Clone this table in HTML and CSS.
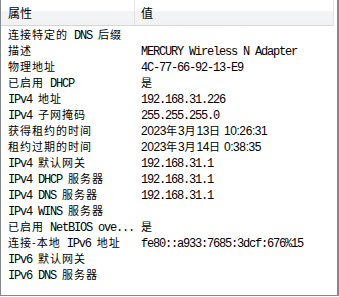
FILE: index.html
```html
<!DOCTYPE html>
<html lang="zh-CN">
<head>
  <meta charset="UTF-8" />
  <title>网络连接详细信息</title>
  <link rel="stylesheet" href="styles.css">
</head>
<body>

  <!-- Details list view -->
  <div class="list">
    <div class="list-head">
      <div class="col name">属性</div>
      <div class="col value">值</div>
    </div>

    <div class="list-body">
      <div class="row"><div class="col name">连接特定的<span class="en"> DNS </span>后缀</div><div class="col value"></div></div>
      <div class="row"><div class="col name">描述</div><div class="col value"><span class="en">MERCURY Wireless N Adapter</span></div></div>
      <div class="row"><div class="col name">物理地址</div><div class="col value"><span class="en">4C-77-66-92-13-E9</span></div></div>
      <div class="row"><div class="col name">已启用<span class="en"> DHCP</span></div><div class="col value">是</div></div>
      <div class="row"><div class="col name"><span class="en">IPv4 </span>地址</div><div class="col value"><span class="en">192.168.31.226</span></div></div>
      <div class="row"><div class="col name"><span class="en">IPv4 </span>子网掩码</div><div class="col value"><span class="en">255.255.255.0</span></div></div>
      <div class="row"><div class="col name">获得租约的时间</div><div class="col value"><span class="num">2023</span>年<span class="num">3</span>月<span class="num">13</span>日<span class="num"> 10:26:31</span></div></div>
      <div class="row"><div class="col name">租约过期的时间</div><div class="col value"><span class="num">2023</span>年<span class="num">3</span>月<span class="num">14</span>日<span class="num"> 0:38:35</span></div></div>
      <div class="row"><div class="col name"><span class="en">IPv4 </span>默认网关</div><div class="col value"><span class="en">192.168.31.1</span></div></div>
      <div class="row"><div class="col name"><span class="en">IPv4 DHCP </span>服务器</div><div class="col value"><span class="en">192.168.31.1</span></div></div>
      <div class="row"><div class="col name"><span class="en">IPv4 DNS </span>服务器</div><div class="col value"><span class="en">192.168.31.1</span></div></div>
      <div class="row"><div class="col name"><span class="en">IPv4 WINS </span>服务器</div><div class="col value"></div></div>
      <div class="row"><div class="col name">已启用<span class="en"> NetBIOS ove...</span></div><div class="col value">是</div></div>
      <div class="row"><div class="col name">连接-本地<span class="en"> IPv6 </span>地址</div><div class="col value"><span class="en">fe80::a933:7685:3dcf:676%15</span></div></div>
      <div class="row"><div class="col name"><span class="en">IPv6 </span>默认网关</div><div class="col value"></div></div>
      <div class="row"><div class="col name"><span class="en">IPv6 DNS </span>服务器</div><div class="col value"></div></div>
    </div>
  </div>

</body>
</html>
```

FILE: styles.css
```css
* {
  box-sizing: border-box;
}

/* CJK glyphs at 11px plus 1px tracking keep a 12px pitch */
body {
  margin: 0;
  background: #fff;
  font-family: "Noto Sans CJK SC", "Liberation Mono", monospace;
  font-size: 11px;
  letter-spacing: 1px;
  color: #000;
}

.list {
  width: 339px;
  height: 296px;
  border-left: 1px solid #828790;
  border-right: 2px solid #828790;
  border-bottom: 1px solid #828790;
  padding-right: 3px;
  background: #fff;
  overflow: hidden;
}

.list-head,
.row {
  display: grid;
  grid-template-columns: 134px 1fr;
}

.list-head {
  height: 26px;
  line-height: 26px;
  font-size: 12px;
  letter-spacing: 0;
  background: linear-gradient(#ffffff 0%, #ffffff 45%, #f3f4f6 46%, #f1f2f4 100%);
  border-bottom: 1px solid #d5d5d5;
  border-right: 1px solid #e3e4e6;
}

.list-head .name {
  border-right: 1px solid #e3e4e6;
}

.row {
  height: 16px;
  line-height: 16px;
}

.col {
  white-space: nowrap;
  overflow: hidden;
}

.name {
  padding-left: 7px;
}

.value {
  padding-left: 6px;
}

/* latin runs: narrow fixed pitch next to the CJK glyphs */
.en {
  font-family: "Liberation Mono", monospace;
  font-size: 12px;
  letter-spacing: -1.2px;
}

.num {
  font-family: "Liberation Sans", sans-serif;
  font-size: 12px;
  letter-spacing: -0.4px;
}
```
